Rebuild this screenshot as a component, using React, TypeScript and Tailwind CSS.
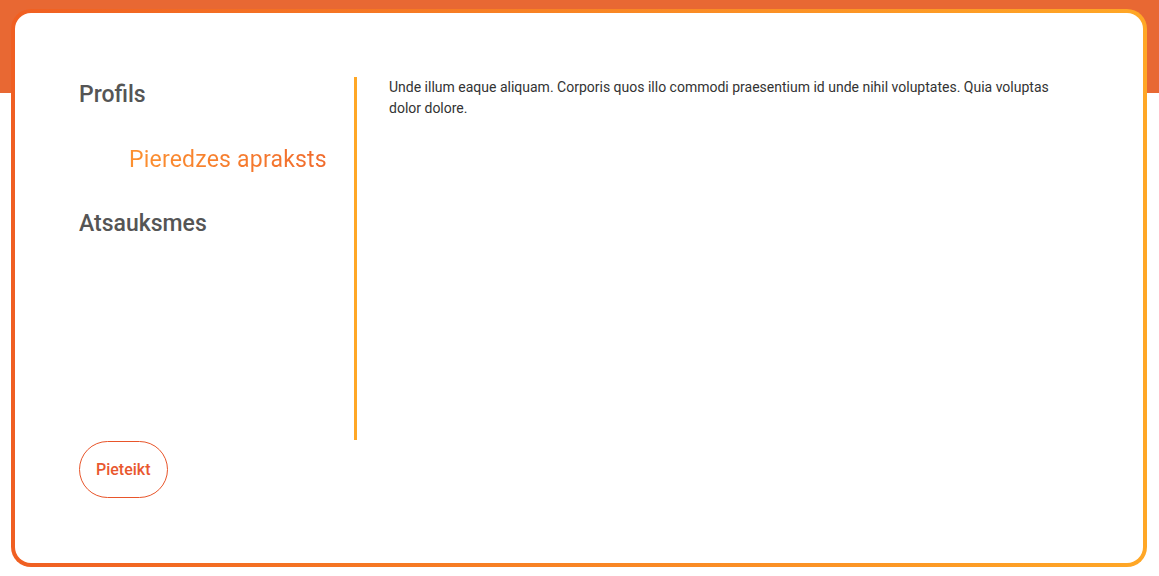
import React from "react";

export default function App() {
  return (
    <div
      className="relative w-[1159px] h-[576px] bg-white overflow-hidden"
      style={{ fontFamily: "Roboto, 'Liberation Sans', sans-serif" }}
    >
      <div className="absolute left-0 top-0 w-full h-[93px] bg-[#e86833]" />
      <div className="relative pt-[9px] pl-[11px] w-[1147px]">
        <div className="rounded-[20px] p-[4px] bg-gradient-to-r from-[#f05f22] to-[#ffa726]">
          <div className="rounded-[16px] bg-white px-[64px] pt-[64px] pb-[65px]">
            <div className="flex h-[363px]">
              <nav className="w-[278px] shrink-0 border-r-[3px] border-[#ffa726] flex flex-col">
                <a className="block text-[23px] font-medium text-[#555555] leading-[28px] mt-[4px]">Profils</a>
                <a className="block text-[23px] tracking-[0.2px] text-transparent bg-clip-text bg-gradient-to-r from-[#ff9a30] to-[#f06a2c] leading-[28px] mt-[37px] pl-[50px] w-fit">
                  Pieredzes apraksts
                </a>
                <a className="block text-[23px] font-medium text-[#555555] leading-[28px] mt-[36px]">Atsauksmes</a>
              </nav>
              <div className="flex-1 pl-[32px]">
                <p className="text-[14px] leading-[21px] text-[#333333]">
                  Unde illum eaque aliquam. Corporis quos illo commodi praesentium id unde nihil voluptates. Quia voluptas dolor dolore.
                </p>
              </div>
            </div>
            <button className="mt-[1px] h-[57px] px-[16px] rounded-full border border-[#e8552a] text-[#e9582f] text-[16px] font-medium">
              Pieteikt
            </button>
          </div>
        </div>
      </div>
    </div>
  );
}
